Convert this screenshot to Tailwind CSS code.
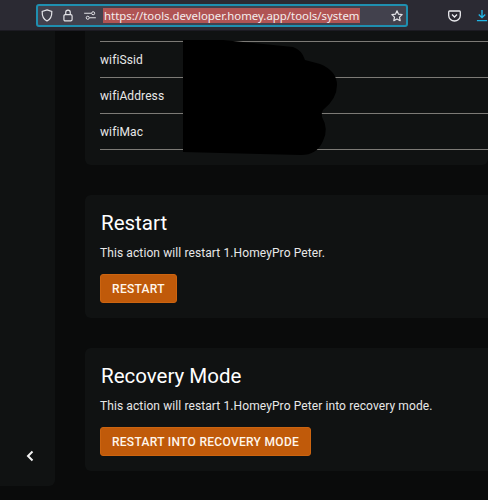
<!DOCTYPE html>
<html lang="en">
<head>
    <meta charset="UTF-8">
    <title>System</title>
    <script src="https://cdn.jsdelivr.net/npm/@tailwindcss/browser@4"></script>
</head>
<body class="relative w-[488px] h-[500px] overflow-hidden bg-[#0a0b0b] font-['Roboto',sans-serif] text-[#e8e8e8]">
    <!-- Browser toolbar -->
    <div class="h-[31px] bg-[#2b2a33] border-b border-[#1c1b22] flex items-start pt-[4px]">
        <div class="ml-[36px] w-[372px] h-[23px] shrink-0 flex items-center rounded-[3px] border-2 border-[#1f8fb0] bg-[#42414d] pl-[3px]">
            <svg class="w-[12px] h-[13px] shrink-0" viewBox="0 0 14 15" fill="none" stroke="#e4e4e8" stroke-width="1.4"><path d="M7 1 12.600 2.800C12.800 8 11 12 7 14 3 12 1.200 8 1.400 2.800Z"/></svg>
            <svg class="w-[10px] h-[13px] ml-[10px] shrink-0" viewBox="0 0 11 14" fill="none" stroke="#e4e4e8" stroke-width="1.300"><path d="M3 6V3.600a2.500 2.500 0 0 1 5 0V6"/><rect x="1" y="6" width="9" height="7" rx="1.500"/></svg>
            <svg class="w-[12px] h-[9px] ml-[11px] shrink-0" viewBox="0 0 13 10" fill="none" stroke="#e4e4e8" stroke-width="1.100"><path d="M0 2.500H8M6 7.500H13"/><circle cx="10" cy="2.500" r="1.700"/><circle cx="4" cy="7.500" r="1.700"/></svg>
            <span class="ml-[7px] px-[1px] bg-[#b05454] text-[#f4eeee] text-[11.4px] leading-[15px] font-['Noto_Sans','Open_Sans',sans-serif] whitespace-nowrap">https://tools.developer.homey.app/tools/system</span>
            <svg class="w-[12px] h-[12px] ml-auto mr-[3px] shrink-0" viewBox="0 0 14 14" fill="none" stroke="#e4e4e8" stroke-width="1.400" stroke-linejoin="round"><path d="M7 1 8.800 4.900 13 5.400 9.900 8.300 10.700 12.500 7 10.400 3.300 12.500 4.100 8.300 1 5.400 5.200 4.900Z"/></svg>
        </div>
        <svg class="w-[13px] h-[12px] mt-[6px] ml-[40px] shrink-0" viewBox="0 0 13 12" fill="none" stroke="#ececf0" stroke-width="1.300"><path d="M1.500 1H11.500Q12.300 1 12.300 2V5.500C12.300 8.800 9.500 11 6.500 11S.7 8.800.7 5.500V2Q.7 1 1.500 1Z"/><path d="M4 4.500 6.500 7 9 4.500"/></svg>
        <svg class="w-[12px] h-[13px] mt-[5px] ml-[15px] shrink-0" viewBox="0 0 13 14" fill="none" stroke="#1fb6e6" stroke-width="1.500"><path d="M6.500 1V9M3 5.800 6.500 9.300 10 5.800M1 12.500H12"/></svg>
    </div>

    <div class="flex gap-[30px]">
        <!-- Sidebar -->
        <aside class="w-[55px] h-[455px] shrink-0 bg-[#101212] rounded-br-[6px] flex items-end justify-center pb-[24px]">
            <svg class="w-[10px] h-[12px] ml-[4px]" viewBox="0 0 10 12" fill="none" stroke="#f2f2f2" stroke-width="2"><path d="M7.500 1.500 3 6l4.500 4.500"/></svg>
        </aside>

        <!-- Content -->
        <main class="flex-1 flex flex-col gap-[30px] min-w-0">
            <section class="h-[134px] bg-[#101212] rounded-b-[6px] pl-[15px] pt-[10px]">
                <div class="border-t border-[#7c7a76] h-[36px] flex items-center text-[12px] tracking-[0.1px]">wifiSsid</div>
                <div class="border-t border-[#7c7a76] h-[36px] flex items-center text-[12px] tracking-[0.1px]">wifiAddress</div>
                <div class="border-t border-[#7c7a76] h-[36px] flex items-center text-[12px] tracking-[0.1px]">wifiMac</div>
                <div class="border-t border-[#7c7a76]"></div>
            </section>

            <section class="h-[123px] bg-[#101212] rounded-l-[6px] pl-[15px] pt-[14px]">
                <h2 class="text-[20.500px] leading-[28px] text-white ml-[1px]">Restart</h2>
                <p class="mt-[7px] text-[12px] leading-[18px] tracking-[0.1px]">This action will restart 1.HomeyPro Peter.</p>
                <button class="block mt-[12px] h-[29px] w-[77px] rounded-[3px] bg-[#c05a0a] border border-[#cc6410] text-[12px] font-medium tracking-[0.3px] text-[#fff6ec]">RESTART</button>
            </section>

            <section class="h-[123px] bg-[#101212] rounded-l-[6px] pl-[15px] pt-[14px]">
                <h2 class="text-[20.500px] leading-[28px] text-white ml-[1px]">Recovery Mode</h2>
                <p class="mt-[7px] text-[12px] leading-[18px] tracking-[0.1px]">This action will restart 1.HomeyPro Peter into recovery mode.</p>
                <button class="block mt-[12px] h-[29px] w-[211px] rounded-[3px] bg-[#c05a0a] border border-[#cc6410] text-[12px] font-medium tracking-[0.3px] text-[#fff6ec]">RESTART INTO RECOVERY MODE</button>
            </section>
        </main>
    </div>

    <!-- Redaction scribble over the values -->
    <svg class="absolute left-[183px] top-[39px] w-[155px] h-[117px]" viewBox="0 0 155 117"><path d="M0 1H40L110 8Q119 11 122 21L137 25Q154 32 154 46 154 60 140 71 138 74 139 78 146 90 140 102 134 116 118 116L77 115 0 113Z" fill="#000"/></svg>
</body>
</html>
